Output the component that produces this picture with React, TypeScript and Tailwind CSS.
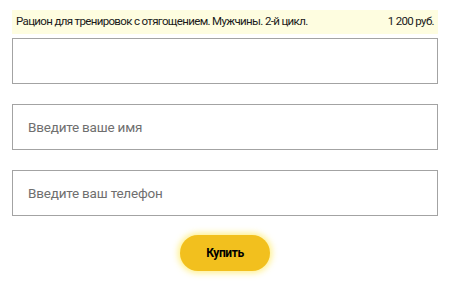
export default function App() {
  return (
    <div className="w-[450px] h-[284px] bg-white font-['Roboto',sans-serif] pt-[10px] px-[12px]">
      <div className="h-[24px] bg-[#fefde0] flex items-center justify-between pl-[4px] pr-[4px] text-[11.5px] tracking-[-0.65px] text-[#1a1a1a]">
        <span>Рацион для тренировок с отягощением. Мужчины. 2-й цикл.</span>
        <span>1 200 руб.</span>
      </div>
      <div className="mt-[4px] h-[46px] border border-[#a3a3a3]"></div>
      <div className="mt-[20px] h-[46px] border border-[#a3a3a3] flex items-center pl-[15px] text-[13.5px] tracking-[-0.2px] text-[#6f6f6f]">
        Введите ваше имя
      </div>
      <div className="mt-[20px] h-[46px] border border-[#a3a3a3] flex items-center pl-[15px] text-[13.5px] tracking-[-0.2px] text-[#6f6f6f]">
        Введите ваш телефон
      </div>
      <div className="flex justify-center mt-[19px]">
        <button className="w-[90px] h-[36px] rounded-full bg-[#f2c01e] shadow-[0_0_6px_2px_rgba(255,230,60,0.6)] text-[12px] tracking-[-0.4px] font-bold text-black">
          Купить
        </button>
      </div>
    </div>
  );
}
